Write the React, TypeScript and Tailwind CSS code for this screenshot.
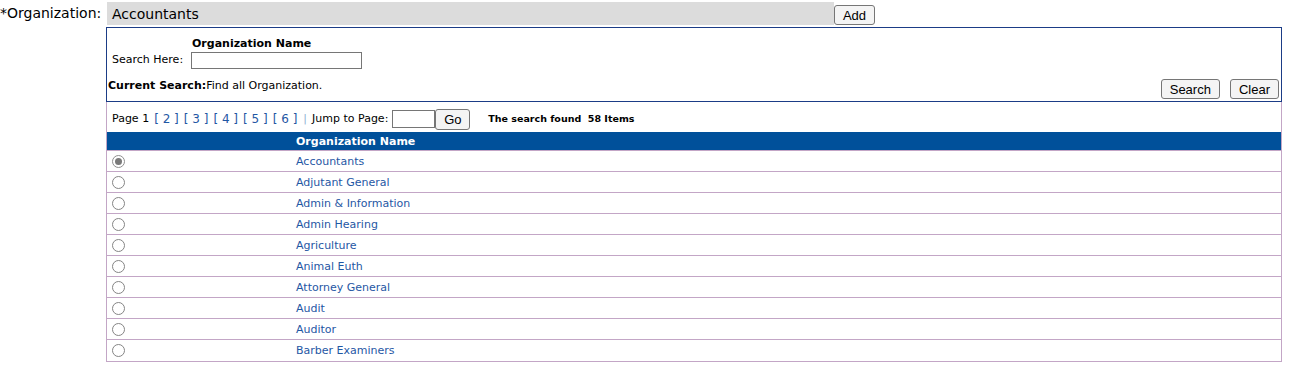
const organizations = [
  "Accountants",
  "Adjutant General",
  "Admin & Information",
  "Admin Hearing",
  "Agriculture",
  "Animal Euth",
  "Attorney General",
  "Audit",
  "Auditor",
  "Barber Examiners",
];

const pages = ["2", "3", "4", "5", "6"];

const Radio = ({ checked }: { checked?: boolean }) => (
  <span
    className={
      checked
        ? "flex h-[13px] w-[13px] items-center justify-center rounded-full border border-[#8f8f8f] bg-white"
        : "block h-[13px] w-[13px] rounded-full border border-[#858585] bg-white"
    }
  >
    {checked && <span className="block h-[7px] w-[7px] rounded-full bg-[#7a7a7a]" />}
  </span>
);

const Button = ({ label, className = "" }: { label: string; className?: string }) => (
  <button
    className={`h-[20px] rounded-[3px] border border-[#767676] bg-[#f4f4f4] px-[8px] text-[13px] leading-none text-black [font-family:'Liberation_Sans',Arial,sans-serif] ${className}`}
  >
    {label}
  </button>
);

export default function App() {
  return (
    <div className="min-h-[370px] bg-white text-black [font-family:'DejaVu_Sans',Verdana,sans-serif]">
      <div className="flex items-start pt-[2px]">
        <label className="w-[106px] shrink-0 pt-[2px] text-[14px] leading-[18px]">*Organization:</label>

        <div className="w-[1176px]">
          <div className="flex items-start">
            <div className="ml-[1px] h-[23px] w-[727px] bg-[#dcdcdc] pl-[5px] text-[14px] leading-[24px]">
              Accountants
            </div>
            <Button label="Add" className="mt-[3px] w-[41px] !px-0" />
          </div>

          {/* search panel */}
          <div className="mt-[2px] flex h-[75px] flex-col border border-[#1b3c86] pl-[1px] pr-[2px]">
            <div className="flex items-end pt-[9px]">
              <span className="w-[83px] pl-[4px] pb-[1px] text-[11px] leading-[16px]">Search Here:</span>
              <div className="flex flex-col">
                <span className="pl-[1px] text-[11px] font-bold leading-[13px]">Organization Name</span>
                <input
                  type="text"
                  className="mt-[2px] h-[17px] w-[171px] border border-[#767676] bg-white outline-none"
                />
              </div>
            </div>
            <div className="mt-auto flex items-end justify-between pb-[2px]">
              <span className="pb-[7px] text-[11px] leading-[13px]">
                <b>Current Search:</b>Find all Organization.
              </span>
              <div className="flex gap-[10px]">
                <Button label="Search" />
                <Button label="Clear" />
              </div>
            </div>
          </div>

          {/* results */}
          <div className="border-x border-b border-[#c3a6c6]">
            <div className="flex h-[30px] items-center pl-[5px] pt-[4px] text-[11px]">
              <span>Page 1</span>
              {pages.map((p) => (
                <a key={p} className="ml-[5px] cursor-pointer text-[12px] text-[#1f57a4]">
                  [ {p} ]
                </a>
              ))}
              <span className="ml-[6px] text-[#8fb0d4]">|</span>
              <span className="ml-[5px]">Jump to Page:</span>
              <input
                type="text"
                className="ml-[4px] h-[18px] w-[43px] border border-[#767676] bg-white outline-none"
              />
              <button className="h-[21px] w-[35px] rounded-[3px] border border-[#767676] bg-[#f4f4f4] text-[13px] leading-none [font-family:'Liberation_Sans',Arial,sans-serif]">
                Go
              </button>
              <span className="ml-[18px] text-[9.5px] font-bold">
                The search found&nbsp; 58 Items
              </span>
            </div>

            <div className="flex h-[19px] items-center border-b border-[#c3a6c6] bg-[#00509a] pt-[3px] text-[11px] font-bold text-white">
              <span className="w-[189px]" />
              <span>Organization Name</span>
            </div>

            {organizations.map((name, i) => (
              <div
                key={name}
                className={`flex h-[21px] items-center ${i < organizations.length - 1 ? "border-b border-[#c3a6c6]" : ""}`}
              >
                <span className="w-[189px] pl-[5px]">
                  <Radio checked={i === 0} />
                </span>
                <a className="cursor-pointer pt-[2px] text-[11px] text-[#1f57a4]">{name}</a>
              </div>
            ))}
          </div>
        </div>
      </div>
    </div>
  );
}
